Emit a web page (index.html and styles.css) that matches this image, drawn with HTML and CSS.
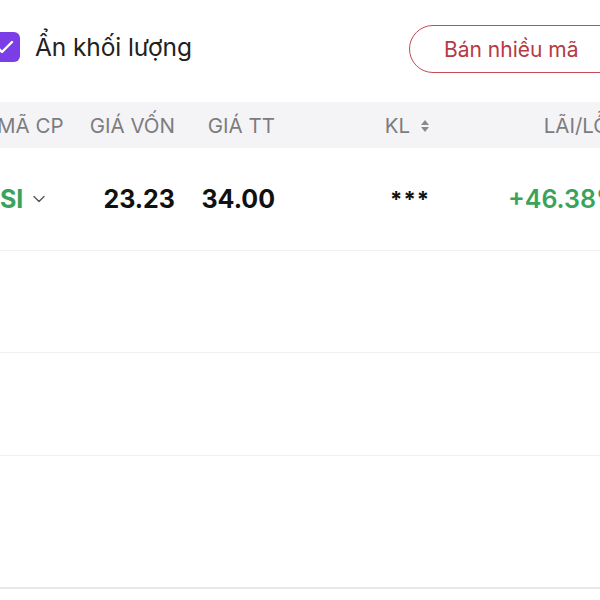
FILE: index.html
```html
<!DOCTYPE html>
<html lang="vi">
<head>
<meta charset="utf-8">
<link rel="stylesheet" href="styles.css">
</head>
<body>
<div class="page">
  <div class="toolbar">
    <label class="check">
      <span class="box">
        <svg width="30" height="30" viewBox="0 0 30 30"><path d="M8 16 L12 20 L22 10" fill="none" stroke="#fff" stroke-width="2.4" stroke-linecap="round" stroke-linejoin="round"/></svg>
      </span>
      <span class="check-label">Ẩn khối lượng</span>
    </label>
    <button class="sell">Bán nhiều mã</button>
  </div>

  <div class="table">
    <div class="row head">
      <div class="c1">MÃ CP</div>
      <div class="c2">GIÁ VỐN</div>
      <div class="c3">GIÁ TT</div>
      <div class="c4">KL
        <svg class="sort" width="10" height="14" viewBox="0 0 10 14"><path d="M5 1 L9 6 H1 Z M5 13 L9 8 H1 Z" fill="#8a8a8e"/></svg>
      </div>
      <div class="c5">LÃI/LỖ</div>
    </div>
    <div class="row body first">
      <div class="c1 ticker">SI
        <svg class="chev" width="12" height="8" viewBox="0 0 12 8"><path d="M1 1.5 L6 6.5 L11 1.5" fill="none" stroke="#555" stroke-width="1.4" stroke-linecap="round" stroke-linejoin="round"/></svg>
      </div>
      <div class="c2 num">23.23</div>
      <div class="c3 num">34.00</div>
      <div class="c4 num mask">***</div>
      <div class="c5 num up">+46.38%</div>
    </div>
    <div class="row body"></div>
    <div class="row body tall"></div>
    <div class="row body last"></div>
  </div>
</div>
</body>
</html>
```

FILE: styles.css
```css
html, body {
  margin: 0;
  padding: 0;
  background: #fff;
  overflow: hidden;
}
body {
  width: 600px;
  height: 600px;
  font-family: "Inter", "Noto Sans", sans-serif;
  color: #1c1c1e;
}
.page {
  width: 680px;
  margin-left: -10px;
}
.toolbar {
  display: flex;
  justify-content: space-between;
  align-items: flex-start;
  padding-top: 25px;
  box-sizing: border-box;
  height: 102px;
}
.check {
  display: flex;
  align-items: center;
  gap: 15px;
  margin-top: 7px;
}
.box {
  width: 30px;
  height: 30px;
  border-radius: 6px;
  background: #7a3de6;
  display: flex;
}
.check-label {
  font-size: 24.5px;
  color: #222;
  letter-spacing: -0.1px;
}
.sell {
  font-family: inherit;
  width: 250px;
  height: 48px;
  border: 1.6px solid #c44a54;
  border-radius: 24px;
  background: #fff;
  color: #b63a45;
  font-size: 21px;
  text-align: left;
  padding-left: 34px;
  margin-right: 11px;
}
.table {
  width: 100%;
}
.row {
  display: grid;
  grid-template-columns: 88px 97px 100px 155px 195px;
  align-items: center;
}
.head {
  height: 46px;
  background: #f4f4f6;
  color: #7c7c80;
  font-size: 20.5px;
}
.c1 { padding-left: 7px; display: flex; align-items: center; gap: 10px; }
.c2, .c3, .c4, .c5 { text-align: right; }
.c4 { display: flex; justify-content: flex-end; align-items: center; gap: 10px; }
.sort { margin-top: 1px; }
.body {
  height: 102px;
  border-bottom: 1px solid #f0f0f2;
  box-sizing: border-box;
  font-size: 25px;
}
.first, .tall { height: 103px; }
.ticker {
  color: #3aa35b;
  font-weight: 700;
  padding-left: 10px;
}
.num { font-weight: 700; color: #111; }
.mask { font-size: 22px; letter-spacing: 1px; }
.up { color: #3aa35b; font-weight: 600; }
.head .c5 { padding-right: 16px; }
.body .c5 { padding-right: 4px; }
.last {
  height: 133px;
  border-bottom: 2px solid #e8e8ea;
}
```
